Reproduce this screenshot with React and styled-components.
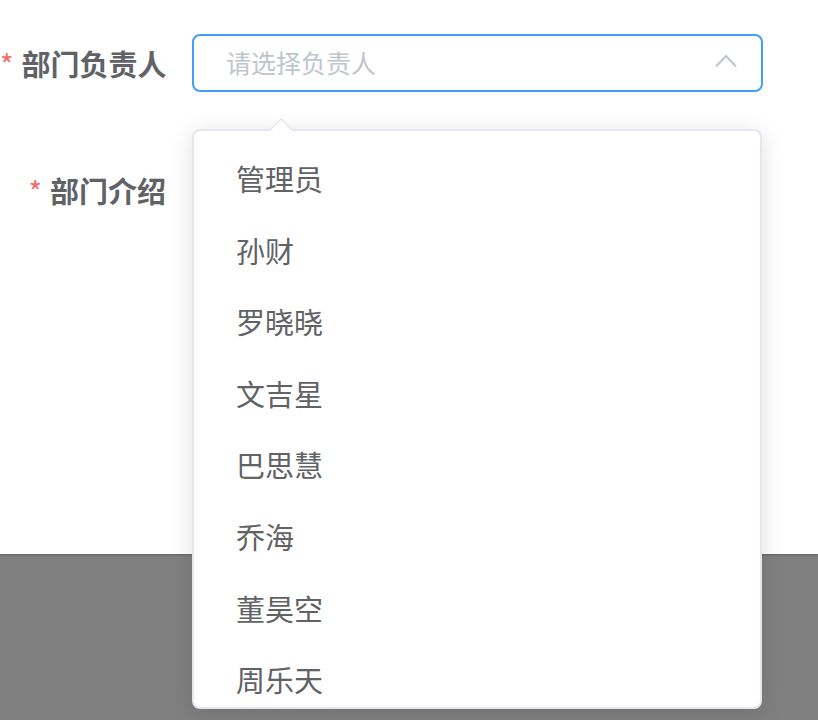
import React from "react";
import styled, { createGlobalStyle } from "styled-components";

const Global = createGlobalStyle`
  html, body { margin: 0; padding: 0; background: #808080; }
  body { font-family: "Noto Sans CJK SC", "Noto Sans", sans-serif; width: 818px; height: 720px; overflow: hidden; }
`;

const Dialog = styled.div`
  position: relative;
  height: 554px;
  background: #fff;
  box-shadow: 0 1px 2px rgba(0, 0, 0, 0.25);
  padding-top: 34px;
  box-sizing: border-box;
`;

const FormItem = styled.div`
  display: flex;
  align-items: flex-start;
  margin-bottom: ${(p) => p.$gap || 0}px;
`;

const Label = styled.label`
  width: 192px;
  box-sizing: border-box;
  padding-right: 26px;
  text-align: right;
  font-size: 29px;
  font-weight: 700;
  line-height: 58px;
  height: 58px;
  color: #606266;
  white-space: nowrap;
  &::before {
    content: "*";
    color: #f56c6c;
    margin-right: 8px;
    font-weight: 400;
  }
`;

const SelectWrap = styled.div`
  position: relative;
  width: 571px;
`;

const InputBox = styled.div`
  height: 58px;
  box-sizing: border-box;
  border: 2px solid #409eff;
  border-radius: 8px;
  display: flex;
  align-items: center;
  justify-content: space-between;
  padding: 0 24px 0 32px;
  background: #fff;
`;

const Placeholder = styled.span`
  font-size: 25px;
  color: #c0c4cc;
  line-height: 1;
  margin-top: -2px;
`;

const Field = styled.div`
  width: 571px;
  height: 58px;
`;

const Dropdown = styled.div`
  position: absolute;
  left: 0;
  top: calc(100% + 37px);
  width: 570px;
  height: 580px;
  box-sizing: border-box;
  background: #fff;
  border: 2px solid #e4e7ed;
  border-radius: 8px;
  box-shadow: 0 4px 25px rgba(0, 0, 0, 0.12);
  z-index: 10;
`;

const Arrow = styled.div`
  position: absolute;
  top: -13px;
  left: 75px;
  width: 0;
  height: 0;
  border-left: 12px solid transparent;
  border-right: 12px solid transparent;
  border-bottom: 12px solid #e4e7ed;
  &::after {
    content: "";
    position: absolute;
    left: -11px;
    top: 2px;
    border-left: 11px solid transparent;
    border-right: 11px solid transparent;
    border-bottom: 11px solid #fff;
  }
`;

const List = styled.ul`
  list-style: none;
  margin: 0;
  padding: 12px 0 0;
  height: 100%;
  overflow: hidden;
  border-radius: 8px;
  box-sizing: border-box;
`;

const Item = styled.li`
  height: 71.6px;
  line-height: 71.6px;
  padding: 0 42px;
  font-size: 29px;
  color: #606266;
  white-space: nowrap;
`;

const Chevron = () => (
  <svg width="22" height="14" viewBox="0 0 22 14" style={{ marginTop: -4 }}>
    <polyline points="1,12.5 11,2 21,12.5" fill="none" stroke="#c0c4cc" strokeWidth="2" />
  </svg>
);

const people = ["管理员", "孙财", "罗晓晓", "文吉星", "巴思慧", "乔海", "董昊空", "周乐天"];

export default function App() {
  return (
    <>
      <Global />
      <Dialog>
        <FormItem $gap={69}>
          <Label>部门负责人</Label>
          <SelectWrap>
            <InputBox>
              <Placeholder>请选择负责人</Placeholder>
              <Chevron />
            </InputBox>
            <Dropdown>
              <Arrow />
              <List>
                {people.map((p) => (
                  <Item key={p}>{p}</Item>
                ))}
              </List>
            </Dropdown>
          </SelectWrap>
        </FormItem>
        <FormItem>
          <Label>部门介绍</Label>
          <Field />
        </FormItem>
      </Dialog>
    </>
  );
}
